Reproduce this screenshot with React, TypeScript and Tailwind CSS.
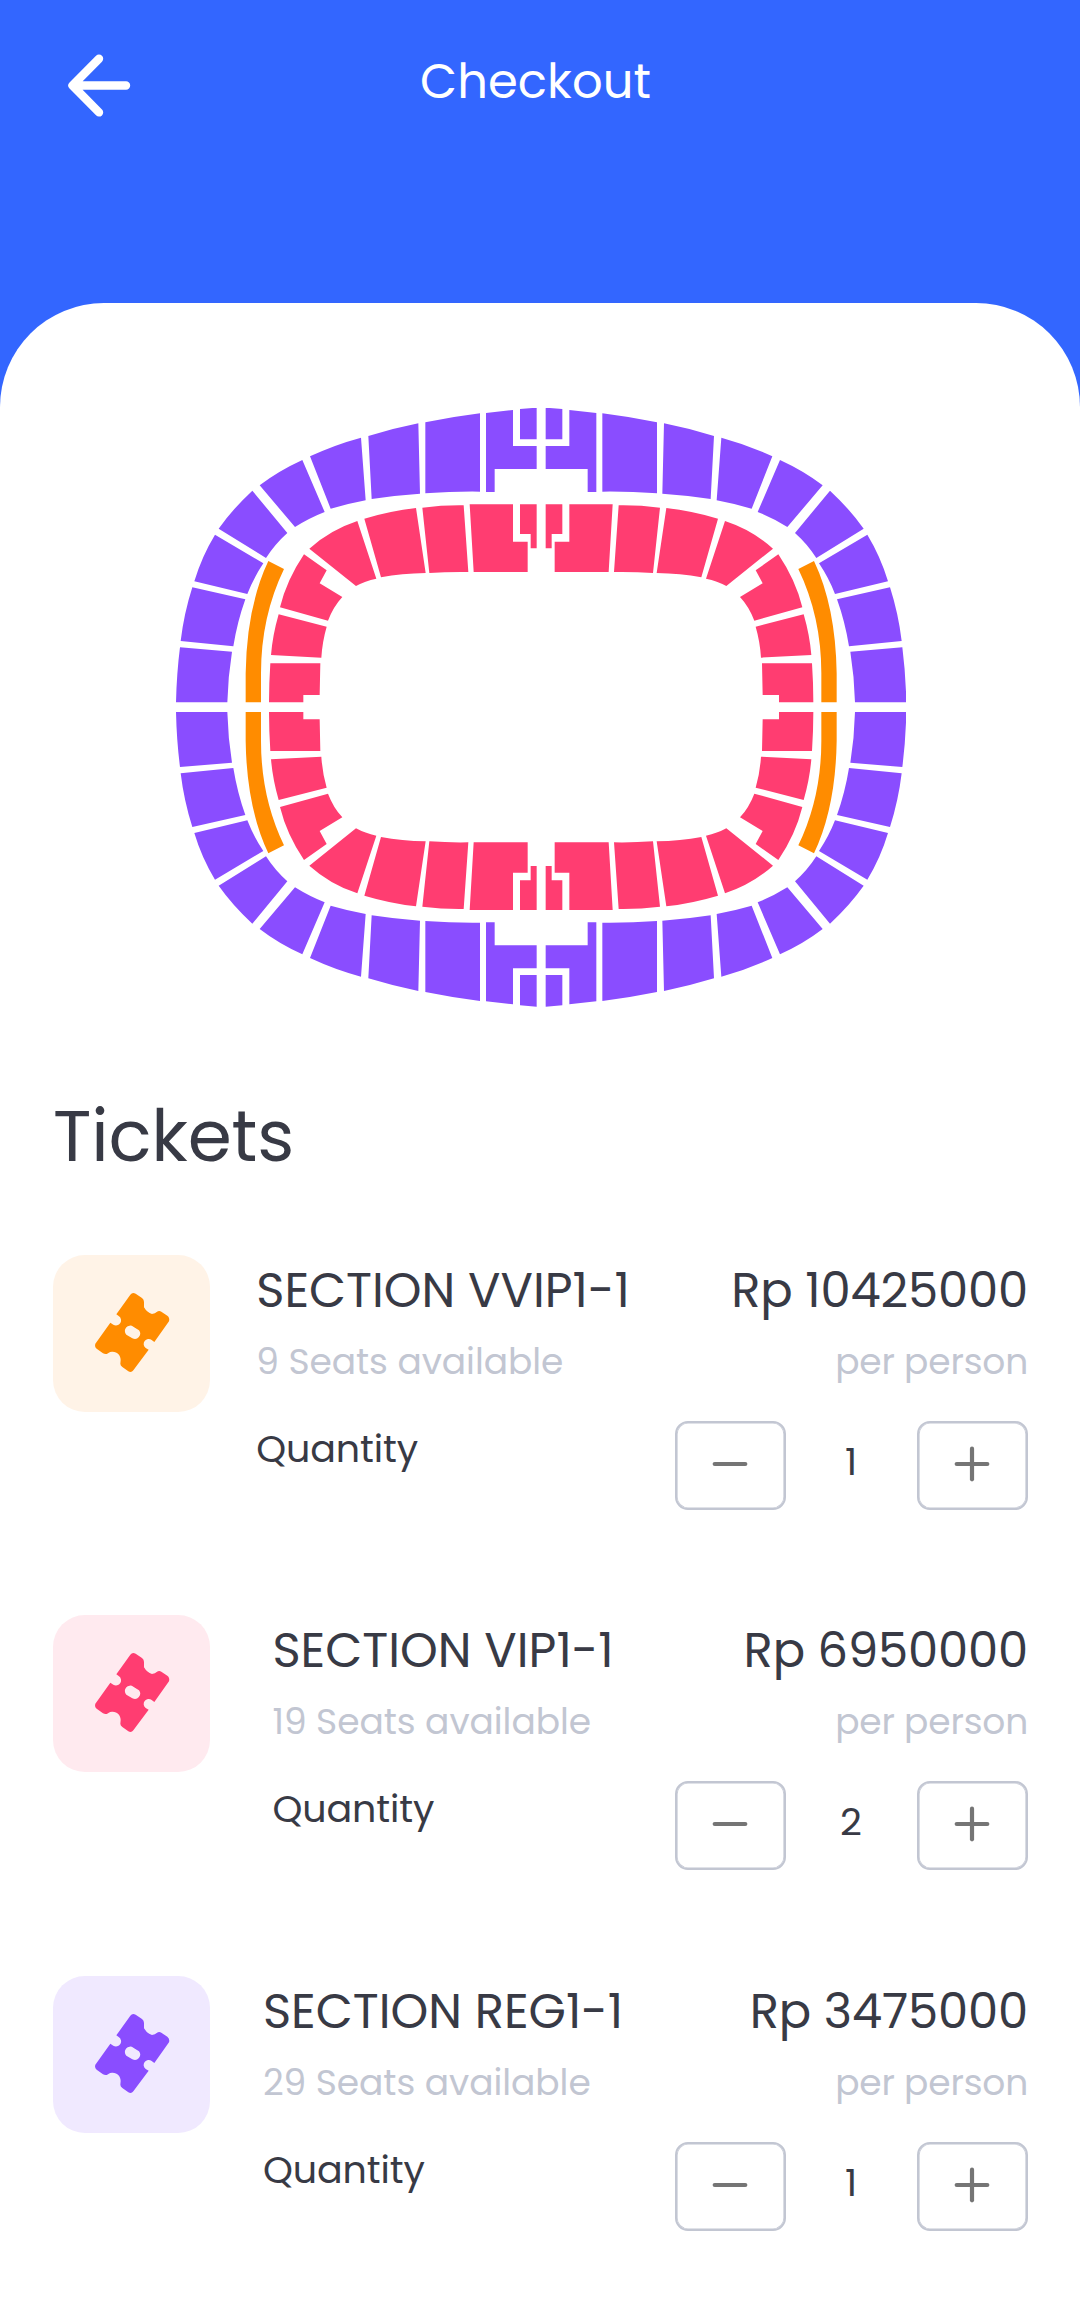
import React from "react";

const PURPLE = "#8A4DFF";
const PINK = "#FF3D71";
const ORANGE = "#FF8C00";

const purpleSeats = [
  "M1080 57L1130 53V148H1080Z",
  "M978 69L1059 60V168H1130V237H1004V306H978Z",
  "M796 97Q880 80 960 70V305Q880 304 796 310Z",
  "M625 138Q700 115 775 100L780 311Q705 316 635 327Z",
  "M450 199Q525 164 603 143L617 331Q560 342 512 356Z",
  "M299 286Q355 243 427 210L494 366Q450 383 405 411Z",
  "M176 416Q217 358 277 302L382 429Q345 462 318 504Z",
  "M103 574Q125 500 165 434L310 520Q280 565 262 612Z",
  "M62 753Q72 670 97 592L256 628Q232 695 220 769Z",
  "M48 937Q50 850 60 772L216 785Q204 860 202 937Z",
];

const pinkSeats = [
  "M1080 343H1130V475H1112V432H1080Z",
  "M929 343H1059V455H1103V546H941Z",
  "M787 353Q850 345 911 346L925 546Q865 545 808 549Z",
  "M613 386Q690 363 768 354L797 549Q725 550 663 562Z",
  "M448 476Q510 420 592 393L649 566Q615 573 588 588Z",
  "M432 493L500 541L479 580L547 621Q520 650 504 692L360 652Q380 570 432 493Z",
  "M356 673L500 710Q487 755 484 803L333 795Q338 735 356 673Z",
  "M331 820H481L479 915H430V937H327Q327 880 331 820Z",
];

function StadiumQuarter({ transform }: { transform?: string }) {
  return (
    <g transform={transform}>
      {purpleSeats.map((d) => (
        <path key={d} d={d} fill={PURPLE} />
      ))}
      <path d="M325 513L372 537Q303 680 303 850V937H257V850Q260 650 325 513Z" fill={ORANGE} />
      {pinkSeats.map((d) => (
        <path key={d} d={d} fill={PINK} />
      ))}
    </g>
  );
}

function StadiumMap() {
  return (
    <svg viewBox="48 54 2190 1797" className="h-[599px] w-[730px]">
      <StadiumQuarter />
      <StadiumQuarter transform="translate(2287 0) scale(-1 1)" />
      <StadiumQuarter transform="translate(0 1903) scale(1 -1)" />
      <StadiumQuarter transform="translate(2287 1903) scale(-1 -1)" />
    </svg>
  );
}

function TicketIcon() {
  return (
    <svg viewBox="0 0 330 330" className="h-[110px] w-[110px]" fill="currentColor">
      <path
        fillRule="evenodd"
        d="M109 103L151 44Q157 36 167 41L186 54Q192 58 192 66V82Q201 98 216 102Q226 101 230 96Q237 91 244 95L262 107Q270 113 267 124L223 186L215 180A15 15 0 1 0 197 204L206 209L160 271Q154 279 145 274L127 261Q121 257 121 251L122 240C122 226 112 214 96 215C88 215 84 220 80 222Q74 223 69 220L50 206Q43 200 46 191L91 128L100 134A15 15 0 1 0 116 108ZM160 140A16 16 0 0 0 139 164L157 175A16 16 0 0 0 177 151Z"
      />
    </svg>
  );
}

function StepButton({ plus }: { plus?: boolean }) {
  return (
    <button
      aria-label={plus ? "Add ticket" : "Remove ticket"}
      className="flex h-[89px] w-[111px] items-center justify-center rounded-[13px] border-2 border-[#C2C6D2] pr-px pb-[3px] text-[#757575] shadow-[inset_0_0_0_0.6px_#C2C6D2]"
    >
      <svg viewBox="0 0 40 40" className="size-10" stroke="currentColor" strokeWidth="4.2" strokeLinecap="round">
        <path d="M4.7 20H35.3" />
        {plus && <path d="M20 4.7V35.3" />}
      </svg>
    </button>
  );
}

interface Ticket {
  name: string;
  seats: number;
  price: string;
  quantity: number;
  tile: string;
}

const tickets: Ticket[] = [
  { name: "SECTION VVIP1-1", seats: 9, price: "Rp 10425000", quantity: 1, tile: "bg-[#FFF3E7] text-[#FF8C00]" },
  { name: "SECTION VIP1-1", seats: 19, price: "Rp 6950000", quantity: 2, tile: "bg-[#FFEAEF] text-[#FF3D71]" },
  { name: "SECTION REG1-1", seats: 29, price: "Rp 3475000", quantity: 1, tile: "bg-[#F0E9FF] text-[#8A4DFF]" },
];

function TicketRow({ ticket }: { ticket: Ticket }) {
  return (
    <li className="flex h-[360.4px] items-start">
      <div className={`flex size-[157px] shrink-0 items-center justify-center rounded-[32px] pt-[3px] pl-[6px] ${ticket.tile}`}>
        <TicketIcon />
      </div>
      <div className="ml-[33px] flex w-[400px] shrink-0 justify-center pt-2">
        <div>
          <h3 className="text-[48px] leading-[56px] whitespace-nowrap">{ticket.name}</h3>
          <p className="mt-[15px] text-[36px] leading-[56px] tracking-[-0.05px] whitespace-nowrap text-[#C2C6D2]">
            {ticket.seats} Seats available
          </p>
          <p className="mt-[31px] text-[38px] leading-[56px] tracking-[-0.1px]">Quantity</p>
        </div>
      </div>
      <div className="flex flex-1 flex-col items-end pt-2">
        <p className="text-[48px] leading-[56px] tracking-[-0.15px] whitespace-nowrap">{ticket.price}</p>
        <p className="mt-[15px] text-[36px] leading-[56px] tracking-[-0.18px] text-[#C2C6D2]">per person</p>
        <div className="mt-[31px] flex">
          <StepButton />
          <span className="w-[131px] pr-px text-center text-[38px] leading-[81px]">{ticket.quantity}</span>
          <StepButton plus />
        </div>
      </div>
    </li>
  );
}

export default function App() {
  return (
    <div className="h-[2320px] w-[1080px] overflow-hidden bg-[#3366FF] font-[Poppins,Inter,sans-serif] text-[#383A45]">
      <header className="flex h-[303px] items-start pl-[66px] text-white">
        <svg
          viewBox="0 0 66 66"
          className="mt-[53px] size-[66px]"
          fill="none"
          stroke="currentColor"
          strokeWidth="8.4"
          strokeLinecap="round"
          strokeLinejoin="round"
        >
          <path d="M60 32.5H6.5M33 5.8L6.5 32.5L33 59.4" />
        </svg>
        <h1 className="mt-[46px] ml-[288px] text-[48px] leading-[72px] tracking-[0.1px]">Checkout</h1>
      </header>
      <main className="h-[2017px] rounded-t-[104px] bg-white pt-[105px]">
        <div className="pl-[176px]">
          <StadiumMap />
        </div>
        <section className="pt-[75px] pr-[52px] pl-[53px]">
          <h2 className="text-[71px] leading-[108px] tracking-[-0.2px]">Tickets</h2>
          <ul className="mt-[65px]">
            {tickets.map((t) => (
              <TicketRow key={t.name} ticket={t} />
            ))}
          </ul>
        </section>
      </main>
    </div>
  );
}
